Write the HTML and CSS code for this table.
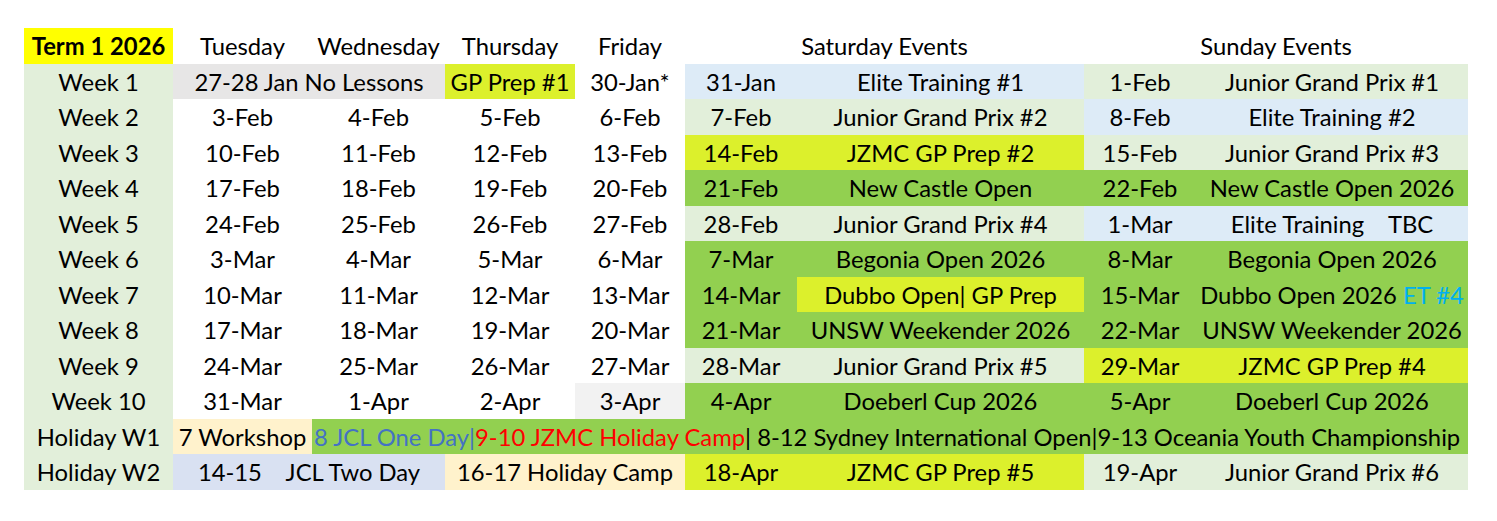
FILE: index.html
```html
<!DOCTYPE html>
<html lang="en">
<head>
<meta charset="utf-8">
<title>Term 1 2026</title>
<link rel="stylesheet" href="styles.css">
</head>
<body>
<div class="sheet">
  <!-- header -->
  <div class="c yellow bold">Term 1 2026</div>
  <div class="c">Tuesday</div>
  <div class="c">Wednesday</div>
  <div class="c">Thursday</div>
  <div class="c">Friday</div>
  <div class="c s2">Saturday Events</div>
  <div class="c s2">Sunday Events</div>

  <!-- week 1 -->
  <div class="c lab">Week 1</div>
  <div class="c s2 grey">27-28 Jan No Lessons</div>
  <div class="c lime">GP Prep #1</div>
  <div class="c">30-Jan*</div>
  <div class="c lblue">31-Jan</div>
  <div class="c lblue">Elite Training #1</div>
  <div class="c lgreen">1-Feb</div>
  <div class="c lgreen">Junior Grand Prix #1</div>

  <!-- week 2 -->
  <div class="c lab">Week 2</div>
  <div class="c">3-Feb</div>
  <div class="c">4-Feb</div>
  <div class="c">5-Feb</div>
  <div class="c">6-Feb</div>
  <div class="c lgreen">7-Feb</div>
  <div class="c lgreen">Junior Grand Prix #2</div>
  <div class="c lblue">8-Feb</div>
  <div class="c lblue">Elite Training #2</div>

  <!-- week 3 -->
  <div class="c lab">Week 3</div>
  <div class="c">10-Feb</div>
  <div class="c">11-Feb</div>
  <div class="c">12-Feb</div>
  <div class="c">13-Feb</div>
  <div class="c lime">14-Feb</div>
  <div class="c lime">JZMC GP Prep #2</div>
  <div class="c lgreen">15-Feb</div>
  <div class="c lgreen">Junior Grand Prix #3</div>

  <!-- week 4 -->
  <div class="c lab">Week 4</div>
  <div class="c">17-Feb</div>
  <div class="c">18-Feb</div>
  <div class="c">19-Feb</div>
  <div class="c">20-Feb</div>
  <div class="c green">21-Feb</div>
  <div class="c green">New Castle Open</div>
  <div class="c green">22-Feb</div>
  <div class="c green">New Castle Open 2026</div>

  <!-- week 5 -->
  <div class="c lab">Week 5</div>
  <div class="c">24-Feb</div>
  <div class="c">25-Feb</div>
  <div class="c">26-Feb</div>
  <div class="c">27-Feb</div>
  <div class="c lgreen">28-Feb</div>
  <div class="c lgreen">Junior Grand Prix #4</div>
  <div class="c lblue">1-Mar</div>
  <div class="c lblue">Elite Training    TBC</div>

  <!-- week 6 -->
  <div class="c lab">Week 6</div>
  <div class="c">3-Mar</div>
  <div class="c">4-Mar</div>
  <div class="c">5-Mar</div>
  <div class="c">6-Mar</div>
  <div class="c green">7-Mar</div>
  <div class="c green">Begonia Open 2026</div>
  <div class="c green">8-Mar</div>
  <div class="c green">Begonia Open 2026</div>

  <!-- week 7 -->
  <div class="c lab">Week 7</div>
  <div class="c">10-Mar</div>
  <div class="c">11-Mar</div>
  <div class="c">12-Mar</div>
  <div class="c">13-Mar</div>
  <div class="c green">14-Mar</div>
  <div class="c lime">Dubbo Open| GP Prep</div>
  <div class="c green">15-Mar</div>
  <div class="c green">Dubbo Open 2026 <span class="t-cyan">ET #4</span></div>

  <!-- week 8 -->
  <div class="c lab">Week 8</div>
  <div class="c">17-Mar</div>
  <div class="c">18-Mar</div>
  <div class="c">19-Mar</div>
  <div class="c">20-Mar</div>
  <div class="c green">21-Mar</div>
  <div class="c green">UNSW Weekender 2026</div>
  <div class="c green">22-Mar</div>
  <div class="c green">UNSW Weekender 2026</div>

  <!-- week 9 -->
  <div class="c lab">Week 9</div>
  <div class="c">24-Mar</div>
  <div class="c">25-Mar</div>
  <div class="c">26-Mar</div>
  <div class="c">27-Mar</div>
  <div class="c lgreen">28-Mar</div>
  <div class="c lgreen">Junior Grand Prix #5</div>
  <div class="c lime">29-Mar</div>
  <div class="c lime">JZMC GP Prep #4</div>

  <!-- week 10 -->
  <div class="c lab">Week 10</div>
  <div class="c">31-Mar</div>
  <div class="c">1-Apr</div>
  <div class="c">2-Apr</div>
  <div class="c pale">3-Apr</div>
  <div class="c green">4-Apr</div>
  <div class="c green">Doeberl Cup 2026</div>
  <div class="c green">5-Apr</div>
  <div class="c green">Doeberl Cup 2026</div>

  <!-- holiday w1 -->
  <div class="c lab">Holiday W1</div>
  <div class="c cream">7 Workshop</div>
  <div class="c s7 green left"><span class="t-blue">8 JCL One Day|</span><span class="t-red">9-10 JZMC Holiday Camp</span>| 8-12 Sydney International Open|9-13 Oceania Youth Championship</div>

  <!-- holiday w2 -->
  <div class="c lab">Holiday W2</div>
  <div class="c s2 slate">14-15    JCL Two Day</div>
  <div class="c s2 cream">16-17 Holiday Camp</div>
  <div class="c lime">18-Apr</div>
  <div class="c lime">JZMC GP Prep #5</div>
  <div class="c lgreen">19-Apr</div>
  <div class="c lgreen">Junior Grand Prix #6</div>
</div>
</body>
</html>
```

FILE: styles.css
```css
html, body {
  margin: 0;
  padding: 0;
  background: #ffffff;
}

body {
  padding: 28px 0 0 24px;
  font-family: Lato, "Open Sans", sans-serif;
  font-size: 23.8px;
  color: #000000;
}

.sheet {
  display: grid;
  grid-template-columns: 149px 139px 133px 130px 110px 112px 287px 112px 272px;
  grid-auto-rows: 35.5px;
  width: 1444px;
}

.c {
  display: flex;
  align-items: center;
  justify-content: center;
  white-space: pre;
  overflow: visible;
  line-height: 1;
  padding-top: 3px;
}

.s2 { grid-column: span 2; }
.s7 { grid-column: span 7; }

.left {
  justify-content: flex-start;
  padding-left: 2px;
}

.bold { font-weight: 700; }

.yellow { background: #ffff00; }
.lab { background: #e2efda; }
.grey { background: #e7e6e6; }
.lime { background: #dcf02c; }
.lblue { background: #ddebf7; }
.lgreen { background: #e2efda; }
.green { background: #92d050; }
.pale { background: #f2f2f2; }
.cream { background: #fff2cc; }
.slate { background: #d9e1f2; }

.t-blue { color: #4472c4; }
.t-red { color: #ff0000; }
.t-cyan { color: #00b0f0; }
```
